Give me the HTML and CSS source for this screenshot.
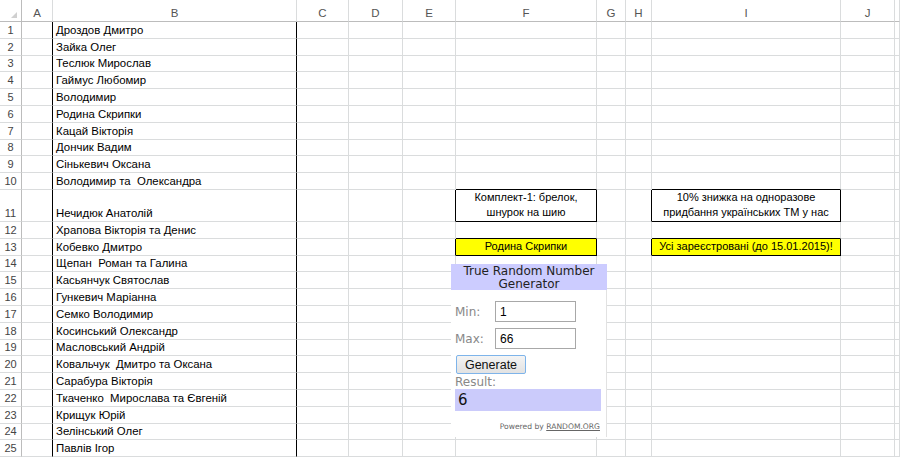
FILE: index.html
```html
<!DOCTYPE html>
<html lang="uk">
<head>
<meta charset="utf-8">
<title>Sheet</title>
<link rel="stylesheet" href="styles.css">
</head>
<body>
<div class="sheet">
  <div class="row hdr"><div class="h corner"><span class="tri"></span></div><div class="h">A</div><div class="h">B</div><div class="h">C</div><div class="h">D</div><div class="h">E</div><div class="h">F</div><div class="h">G</div><div class="h">H</div><div class="h">I</div><div class="h">J</div><div class="h"></div></div>
  <div class="row"><div class="n">1</div><div class="c a"></div><div class="c b">Дроздов Дмитро</div><div class="c"></div><div class="c"></div><div class="c"></div><div class="c"></div><div class="c"></div><div class="c"></div><div class="c"></div><div class="c"></div><div class="c"></div></div>
  <div class="row"><div class="n">2</div><div class="c a"></div><div class="c b">Зайка Олег</div><div class="c"></div><div class="c"></div><div class="c"></div><div class="c"></div><div class="c"></div><div class="c"></div><div class="c"></div><div class="c"></div><div class="c"></div></div>
  <div class="row"><div class="n">3</div><div class="c a"></div><div class="c b">Теслюк Мирослав</div><div class="c"></div><div class="c"></div><div class="c"></div><div class="c"></div><div class="c"></div><div class="c"></div><div class="c"></div><div class="c"></div><div class="c"></div></div>
  <div class="row"><div class="n">4</div><div class="c a"></div><div class="c b">Гаймус Любомир</div><div class="c"></div><div class="c"></div><div class="c"></div><div class="c"></div><div class="c"></div><div class="c"></div><div class="c"></div><div class="c"></div><div class="c"></div></div>
  <div class="row"><div class="n">5</div><div class="c a"></div><div class="c b">Володимир</div><div class="c"></div><div class="c"></div><div class="c"></div><div class="c"></div><div class="c"></div><div class="c"></div><div class="c"></div><div class="c"></div><div class="c"></div></div>
  <div class="row"><div class="n">6</div><div class="c a"></div><div class="c b">Родина Скрипки</div><div class="c"></div><div class="c"></div><div class="c"></div><div class="c"></div><div class="c"></div><div class="c"></div><div class="c"></div><div class="c"></div><div class="c"></div></div>
  <div class="row"><div class="n">7</div><div class="c a"></div><div class="c b">Кацай Вікторія</div><div class="c"></div><div class="c"></div><div class="c"></div><div class="c"></div><div class="c"></div><div class="c"></div><div class="c"></div><div class="c"></div><div class="c"></div></div>
  <div class="row"><div class="n">8</div><div class="c a"></div><div class="c b">Дончик Вадим</div><div class="c"></div><div class="c"></div><div class="c"></div><div class="c"></div><div class="c"></div><div class="c"></div><div class="c"></div><div class="c"></div><div class="c"></div></div>
  <div class="row"><div class="n">9</div><div class="c a"></div><div class="c b">Сінькевич Оксана</div><div class="c"></div><div class="c"></div><div class="c"></div><div class="c"></div><div class="c"></div><div class="c"></div><div class="c"></div><div class="c"></div><div class="c"></div></div>
  <div class="row"><div class="n">10</div><div class="c a"></div><div class="c b">Володимир та  Олександра</div><div class="c"></div><div class="c"></div><div class="c"></div><div class="c tb"></div><div class="c"></div><div class="c"></div><div class="c tb"></div><div class="c"></div><div class="c"></div></div>
  <div class="row tall"><div class="n">11</div><div class="c a"></div><div class="c b">Нечидюк Анатолій</div><div class="c"></div><div class="c"></div><div class="c lb"></div><div class="c bx"><span>Комплект-1: брелок,<br>шнурок на шию</span></div><div class="c"></div><div class="c lb"></div><div class="c bx"><span>10% знижка на одноразове<br>придбання українських ТМ у нас</span></div><div class="c"></div><div class="c"></div></div>
  <div class="row"><div class="n">12</div><div class="c a"></div><div class="c b">Храпова Вікторія та Денис</div><div class="c"></div><div class="c"></div><div class="c"></div><div class="c tb"></div><div class="c"></div><div class="c"></div><div class="c tb"></div><div class="c"></div><div class="c"></div></div>
  <div class="row"><div class="n">13</div><div class="c a"></div><div class="c b">Кобевко Дмитро</div><div class="c"></div><div class="c"></div><div class="c lb"></div><div class="c bx yel"><span>Родина Скрипки</span></div><div class="c"></div><div class="c lb"></div><div class="c bx yel"><span>Усі зареєстровані (до 15.01.2015)!</span></div><div class="c"></div><div class="c"></div></div>
  <div class="row"><div class="n">14</div><div class="c a"></div><div class="c b">Щепан  Роман та Галина</div><div class="c"></div><div class="c"></div><div class="c"></div><div class="c"></div><div class="c"></div><div class="c"></div><div class="c"></div><div class="c"></div><div class="c"></div></div>
  <div class="row"><div class="n">15</div><div class="c a"></div><div class="c b">Касьянчук Святослав</div><div class="c"></div><div class="c"></div><div class="c"></div><div class="c"></div><div class="c"></div><div class="c"></div><div class="c"></div><div class="c"></div><div class="c"></div></div>
  <div class="row"><div class="n">16</div><div class="c a"></div><div class="c b">Гункевич Маріанна</div><div class="c"></div><div class="c"></div><div class="c"></div><div class="c"></div><div class="c"></div><div class="c"></div><div class="c"></div><div class="c"></div><div class="c"></div></div>
  <div class="row"><div class="n">17</div><div class="c a"></div><div class="c b">Семко Володимир</div><div class="c"></div><div class="c"></div><div class="c"></div><div class="c"></div><div class="c"></div><div class="c"></div><div class="c"></div><div class="c"></div><div class="c"></div></div>
  <div class="row"><div class="n">18</div><div class="c a"></div><div class="c b">Косинський Олександр</div><div class="c"></div><div class="c"></div><div class="c"></div><div class="c"></div><div class="c"></div><div class="c"></div><div class="c"></div><div class="c"></div><div class="c"></div></div>
  <div class="row"><div class="n">19</div><div class="c a"></div><div class="c b">Масловський Андрій</div><div class="c"></div><div class="c"></div><div class="c"></div><div class="c"></div><div class="c"></div><div class="c"></div><div class="c"></div><div class="c"></div><div class="c"></div></div>
  <div class="row"><div class="n">20</div><div class="c a"></div><div class="c b">Ковальчук  Дмитро та Оксана</div><div class="c"></div><div class="c"></div><div class="c"></div><div class="c"></div><div class="c"></div><div class="c"></div><div class="c"></div><div class="c"></div><div class="c"></div></div>
  <div class="row"><div class="n">21</div><div class="c a"></div><div class="c b">Сарабура Вікторія</div><div class="c"></div><div class="c"></div><div class="c"></div><div class="c"></div><div class="c"></div><div class="c"></div><div class="c"></div><div class="c"></div><div class="c"></div></div>
  <div class="row"><div class="n">22</div><div class="c a"></div><div class="c b">Ткаченко  Мирослава та Євгеній</div><div class="c"></div><div class="c"></div><div class="c"></div><div class="c"></div><div class="c"></div><div class="c"></div><div class="c"></div><div class="c"></div><div class="c"></div></div>
  <div class="row"><div class="n">23</div><div class="c a"></div><div class="c b">Крищук Юрій</div><div class="c"></div><div class="c"></div><div class="c"></div><div class="c"></div><div class="c"></div><div class="c"></div><div class="c"></div><div class="c"></div><div class="c"></div></div>
  <div class="row"><div class="n">24</div><div class="c a"></div><div class="c b">Зелінський Олег</div><div class="c"></div><div class="c"></div><div class="c"></div><div class="c"></div><div class="c"></div><div class="c"></div><div class="c"></div><div class="c"></div><div class="c"></div></div>
  <div class="row"><div class="n">25</div><div class="c a"></div><div class="c b">Павлів Ігор</div><div class="c"></div><div class="c"></div><div class="c"></div><div class="c"></div><div class="c"></div><div class="c"></div><div class="c"></div><div class="c"></div><div class="c"></div></div>
</div>

<div class="rng">
  <div class="rng-h">True Random Number<br>Generator</div>
  <div class="rng-b">
    <div class="fld"><span class="lbl">Min:</span><span class="inp">1</span></div>
    <div class="fld"><span class="lbl">Max:</span><span class="inp">66</span></div>
    <div class="btn">Generate</div>
    <div class="res-l">Result:</div>
    <div class="res">6</div>
    <div class="pw">Powered by <span class="u">RANDOM.ORG</span></div>
  </div>
</div>
</body>
</html>
```
FILE: styles.css
```css
html, body {
  margin: 0;
  padding: 0;
}
body {
  width: 900px;
  height: 457px;
  overflow: hidden;
  position: relative;
  background: #fff;
  font-family: "Liberation Sans", Arial, sans-serif;
  font-size: 11.4px;
  color: #000;
}
.sheet {
  display: flex;
  flex-direction: column;
}
.row {
  display: grid;
  grid-template-columns: 22px 31px 244px 52px 54px 53px 141px 29px 26px 189px 54px 1fr;
  height: 16.8px;
}
.row.hdr { height: 22px; }
.row.tall { height: 32px; }

.h {
  border-right: 1px solid #dadcdd;
  border-bottom: 1px solid #bcbcbc;
  color: #555;
  font-size: 11.5px;
  display: flex;
  justify-content: center;
  align-items: flex-end;
  padding-bottom: 2px;
  line-height: 12px;
}
.h.corner {
  border-right-color: #bcbcbc;
  position: relative;
}
.tri {
  position: absolute;
  right: 4px;
  bottom: 3px;
  width: 0;
  height: 0;
  border-left: 6px solid transparent;
  border-bottom: 6px solid #d0d0d0;
}
.n {
  border-right: 1px solid #bcbcbc;
  border-bottom: 1px solid #dadcdd;
  color: #444;
  display: flex;
  justify-content: center;
  align-items: flex-end;
  line-height: 15px;
  font-size: 11px;
}
.c {
  border-right: 1px solid #dadcdd;
  border-bottom: 1px solid #dadcdd;
  padding: 0 0 0 3px;
  white-space: pre;
  display: flex;
  align-items: flex-end;
  line-height: 15px;
}
.c.a, .c.b { border-right-color: #000; }
.c.tb { border-bottom-color: #000; }
.c.lb { border-right-color: #000; }
.c.bx {
  border-right-color: #000;
  border-bottom-color: #000;
  justify-content: center;
  align-items: center;
  text-align: center;
  padding: 0;
  font-size: 11px;
}
.c.yel { background: #ffff00; }

/* random.org widget */
.rng {
  position: absolute;
  left: 451px;
  top: 264px;
  width: 156px;
  height: 173px;
  background: #fff;
  font-family: "DejaVu Sans", Verdana, sans-serif;
}
.rng-h {
  background: #ccccff;
  height: 26px;
  box-sizing: border-box;
  padding-top: 1px;
  text-align: center;
  font-size: 12px;
  line-height: 12.5px;
  color: #222;
}
.rng-b {
  box-sizing: border-box;
  height: 147px;
  padding: 11px 0 0 4px;
  border-right: 1px solid #e2e2e2;
}
.fld {
  display: flex;
  align-items: center;
  height: 21px;
  margin-bottom: 6px;
}
.lbl {
  width: 40px;
  color: #888;
  font-size: 12px;
}
.inp {
  width: 81px;
  height: 21px;
  box-sizing: border-box;
  border: 1px solid #a8a8a8;
  font-family: "Liberation Sans", Arial, sans-serif;
  font-size: 12px;
  padding-left: 4px;
  display: flex;
  align-items: center;
  color: #000;
}
.btn {
  margin-left: 1px;
  width: 70px;
  height: 19px;
  box-sizing: border-box;
  border: 1px solid #7eb4ea;
  border-radius: 2px;
  background: linear-gradient(#f4f4f4, #e2e2e2);
  font-family: "Liberation Sans", Arial, sans-serif;
  font-size: 12.5px;
  display: flex;
  align-items: center;
  justify-content: center;
  color: #111;
}
.res-l {
  margin-top: 1px;
  height: 14px;
  line-height: 14px;
  color: #888;
  font-size: 12px;
}
.res {
  width: 146px;
  height: 22px;
  box-sizing: border-box;
  background: #cbcbfb;
  font-size: 15px;
  line-height: 22px;
  padding-left: 3px;
  color: #111;
}
.pw {
  margin-top: 10px;
  width: 145px;
  text-align: right;
  font-size: 7.6px;
  line-height: 12px;
  color: #666;
}
.u { text-decoration: underline; }
```
